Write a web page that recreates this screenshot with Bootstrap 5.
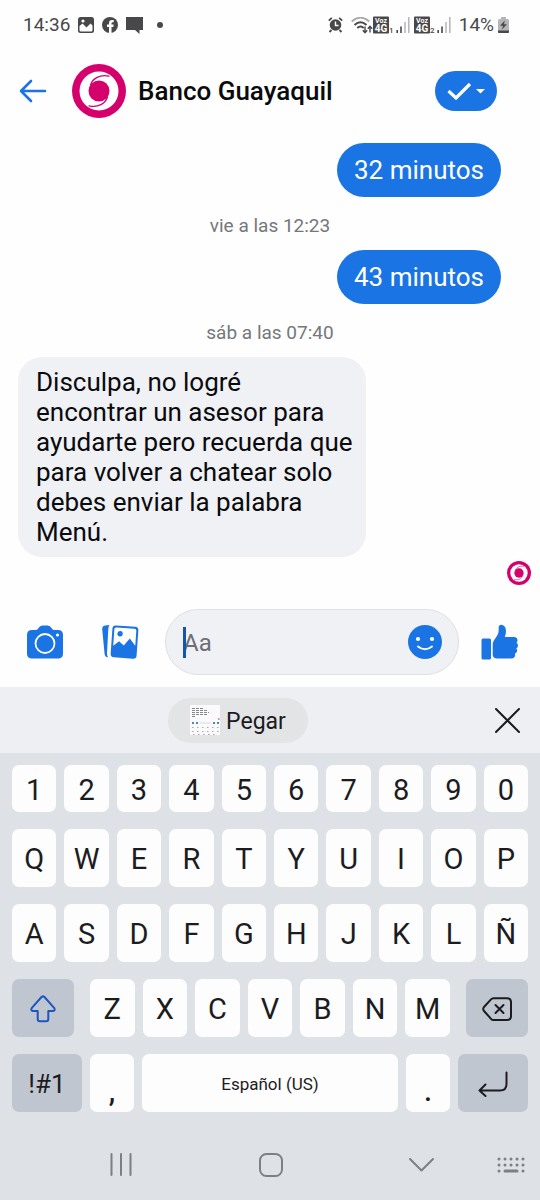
<!DOCTYPE html>
<html lang="es">
<head>
<meta charset="utf-8">
<meta name="viewport" content="width=device-width, initial-scale=1">
<title>Banco Guayaquil</title>
<link href="https://cdn.jsdelivr.net/npm/bootstrap@5.3.0/dist/css/bootstrap.min.css" rel="stylesheet">
<style>
  :root { --brand: #1b74e4; --pink: #d6006d; }
  body { font-family: Roboto, "Liberation Sans", sans-serif; color: #0a0b0d; background: #fefefe; }
  svg { display: block; flex: none; }
  button { font: inherit; }
  .bare { border: 0; background: none; padding: 0; color: var(--brand); }
  .status-bar { height: 50px; padding: 0 31px 0 23px; font-size: 19px; line-height: 24px; color: #48484a; }
  .chat-head { height: 82px; padding: 0 43px 0 19px; }
  .chat-logo { margin-left: 25px; }
  .chat-title { font-size: 26px; line-height: 32px; font-weight: 500; margin: 0 0 0 12px; }
  .check-btn { width: 62px; height: 40px; background: var(--brand); border-radius: 20px; border: 0; padding: 0 12px; }
  .thread { padding: 11px 18px 24px; }
  .bubble { font-size: 26px; line-height: 30px; margin: 0; }
  .bubble-out { background: var(--brand); color: #fff; border-radius: 27px; padding: 12px 17px; margin-right: 21px; }
  .bubble-in { background: #f0f1f5; border-radius: 24px; padding: 10px 12px 10px 18px; max-width: 348px; }
  .seen { margin-right: -9px; }
  .stamp { font-size: 19px; line-height: 25px; padding: 16px 0 12px; color: #75777b; }
  .composer { padding: 0 22px 12px 26px; }
  .gallery-btn { margin-left: 37px; }
  .field { flex: 1 1 0; min-width: 0; height: 66px; border-radius: 33px; background: #f0f1f5; border: 1px solid #dfe0e5; padding: 0 16px 0 17px; margin: 0 22px 0 26px; }
  .field input { flex: 1 1 0; border: 0; background: none; outline: 0; min-width: 0; width: 0; font-size: 24px; line-height: 30px; padding: 2px 0 0; color: #0a0b0d; }
  .field input::placeholder { color: #6d6f73; opacity: 1; }
  .caret { width: 3px; height: 31px; left: 17px; top: 17px; background: #1457a8; }
  .clip-bar { height: 66px; background: #eeeff3; padding: 0 20px; }
  .clip-btn { height: 45px; width: 140px; margin-left: 148px; gap: 6px; border-radius: 23px; border: 0; background: #e3e4e6; font-size: 23px; line-height: 28px; color: #1b1b1d; }
  .clip-btn span { padding-top: 3px; }
  .keyboard { background: #dee1e6; padding: 12px 12px 17px; gap: 17px; }
  .key-line { gap: 8px; }
  .key { flex: 1 1 0; min-width: 0; height: 58px; border: 0; border-radius: 7px; background: #fdfdfd; color: #1c1c1e; font-size: 29px; line-height: 34px; padding: 2px 0 0; display: flex; align-items: center; justify-content: center; }
  .key-num { height: 47px; }
  .key-dark { background: #c0c6d0; }
  .key-side { flex: 0 0 62px; }
  .key-end { flex: 0 0 70px; font-size: 26px; }
  .key-dot { flex: 0 0 44px; padding-top: 15px; font-weight: 500; }
  .key-space { font-size: 17px; }
  .sys-nav { background: #dee1e6; padding: 0 15px 0 46px; height: 71px; }
  .sys-nav button { color: #7c7f85; }
</style>
</head>
<body>
<svg width="0" height="0" class="position-absolute" aria-hidden="true">
  <symbol id="logo" viewBox="0 0 54 54">
    <circle cx="27" cy="27" r="27" fill="#d6006d"/>
    <circle cx="27" cy="27" r="19.500" fill="#fff"/>
    <circle cx="27" cy="27" r="10.500" fill="#d6006d"/>
    <path d="M18.500 21C20.500 14.500 28 10 37 12.200M35.500 33C33.500 39.500 26 44 17 41.800" fill="none" stroke="#d6006d" stroke-width="1.300" stroke-linecap="round"/>
  </symbol>
  <symbol id="bars" viewBox="0 0 14 16">
    <path d="M1.200 13v3M5 9.500V16" stroke="#48484a" stroke-width="1.600"/>
    <path d="M9 5v11M12.800 0v16" stroke="#b5b5b7" stroke-width="1.500"/>
  </symbol>
</svg>

<header>
  <div class="status-bar d-flex align-items-center justify-content-between">
    <div class="d-flex align-items-center gap-2">
      <span>14:36</span>
      <svg width="16" height="16" viewBox="0 0 16 16"><rect width="16" height="16" rx="2.500" fill="#48484a"/><path d="M1.500 13V9l3-2.500 4 4 4-4 2 2V13q0 1.500-1.500 1.500H3Q1.500 14.500 1.500 13Z" fill="#fff"/><circle cx="5" cy="4" r="1.600" fill="#fff"/></svg>
      <svg width="16" height="16" viewBox="0 0 16 16"><circle cx="8" cy="8" r="8" fill="#48484a"/><path d="M7 16V10H5V7.500H7V6q0-3 3-3h1.700v2.300H10.500Q9.500 5.300 9.500 6.300V7.500h2.200L11.300 10H9.500v6Z" fill="#fff"/></svg>
      <svg width="17" height="17" viewBox="0 0 17 17"><path d="M0 0h17v13h-3.500v4L9 13H0Z" fill="#48484a"/></svg>
      <svg width="22" height="6" viewBox="0 0 22 6"><circle cx="9" cy="3" r="3" fill="#48484a"/></svg>
    </div>
    <div class="d-flex align-items-center">
      <svg width="15" height="16" viewBox="0 0 15 16" class="me-2"><circle cx="7.500" cy="8" r="5.800" fill="#48484a"/><path d="M.8 3.600 3.800.9M14.200 3.600l-3-2.700M3.500 13l-2 2M11.500 13l2 2" stroke="#48484a" stroke-width="1.800"/><path d="M7.500 4.500V8.500h3" stroke="#fff" stroke-width="1.400" fill="none"/></svg>
      <svg width="22" height="17" viewBox="0 0 22 17" fill="none"><path d="M.7 4.500Q9.500-3.200 18.300 4.500" stroke="#aaa" stroke-width="1.800"/><path d="M3.500 8Q9.500 2.500 15.500 8M6.300 11Q9.500 8 12.700 11" stroke="#48484a" stroke-width="2"/><path d="M14 9.500v6M11.800 13.300l2.200 2.500 2.200-2.500M19 15.500v-6M16.800 11.700l2.200-2.500 2.200 2.500" stroke="#48484a" stroke-width="1.400"/></svg>
      <svg width="23" height="20" viewBox="0 -2 23 20" font-family="Roboto" fill="#fff" font-weight="700"><rect y="-.5" width="16" height="17" rx="1" fill="#48484a"/><text x="8" y="5.500" text-anchor="middle" font-size="7">Voz</text><text x="8" y="15" text-anchor="middle" font-size="10">4G</text><text x="16" y="16" font-size="8" font-weight="500" fill="#48484a">1</text></svg>
      <svg width="14" height="16"><use href="#bars"/></svg>
      <svg width="23" height="20" viewBox="0 -2 23 20" class="ms-1" font-family="Roboto" fill="#fff" font-weight="700"><rect y="-.5" width="16" height="17" rx="1" fill="#48484a"/><text x="8" y="5.500" text-anchor="middle" font-size="7">Voz</text><text x="8" y="15" text-anchor="middle" font-size="10">4G</text><text x="16" y="16" font-size="8" font-weight="500" fill="#48484a">2</text></svg>
      <svg width="14" height="16"><use href="#bars"/></svg>
      <span class="ms-2 me-1">14%</span>
      <svg width="11" height="16" viewBox="0 0 11 16"><path d="M3 0h5v2h1.500Q11 2 11 3.500V15q0 1-1 1H1q-1 0-1-1V3.500Q0 2 1.500 2H3Z" fill="#b5b5b7"/><path d="M0 13.500h11V15q0 1-1 1H1q-1 0-1-1Z" fill="#48484a"/><path d="M6.800 3.500 2 8.800h3L4 12.500 9 7.300H6Z" fill="#48484a"/></svg>
    </div>
  </div>
  <div class="chat-head d-flex align-items-center">
    <button class="bare" type="button" aria-label="Atrás"><svg width="28" height="24" viewBox="0 0 28 24" fill="none" stroke="#1b74e4" stroke-width="2.600" stroke-linecap="round" stroke-linejoin="round"><path d="M26 12H2M12 2 2 12l10 10"/></svg></button>
    <svg class="chat-logo" width="54" height="54"><use href="#logo"/></svg>
    <h1 class="chat-title">Banco Guayaquil</h1>
    <button class="check-btn ms-auto" type="button" aria-label="Opciones"><svg width="38" height="18" viewBox="0 0 38 18"><path d="M1.500 9 9 16 23 2" fill="none" stroke="#fff" stroke-width="3.200"/><path d="M29 7h9l-4.500 4.500Z" fill="#fff"/></svg></button>
  </div>
</header>

<main class="thread d-flex flex-column">
  <p class="bubble bubble-out align-self-end">32 minutos</p>
  <div class="stamp text-center">vie a las 12:23</div>
  <p class="bubble bubble-out align-self-end">43 minutos</p>
  <div class="stamp text-center">sáb a las 07:40</div>
  <p class="bubble bubble-in align-self-start">Disculpa, no logré encontrar un asesor para ayudarte pero recuerda que para volver a chatear solo debes enviar la palabra Menú.</p>
  <svg width="24" height="24" class="seen align-self-end mt-1"><use href="#logo"/></svg>
</main>

<form class="composer d-flex align-items-center">
  <button class="bare" type="button" aria-label="Cámara"><svg width="38" height="34" viewBox="0 0 38 34"><path d="M6 5h4q1.500 0 2.500-2 1.300-2.500 4-2.500h5q2.700 0 4 2.500 1 2 2.500 2h4q5 0 5 5v18.500q0 5-5 5H6q-5 0-5-5V10q0-5 5-5Z" fill="#1b74e4"/><circle cx="19" cy="18.500" r="9.500" fill="none" stroke="#fff" stroke-width="1.800"/><circle cx="31.500" cy="10" r="1.600" fill="#fff"/></svg></button>
  <button class="bare gallery-btn" type="button" aria-label="Galería"><svg width="38" height="36" viewBox="0 0 38 36"><path d="M4 1.500 8.500 1Q7.500 2.500 7.300 5L6 29q-.2 2.500 1 4.500-3-.5-3.400-3.500L1.200 5Q1 2 4 1.500Z" fill="#1b74e4"/><g transform="rotate(4 23 18)"><rect x="10.500" y="2" width="26" height="32" rx="3.500" fill="#1b74e4"/><path d="M12.500 6q0-2 2-2h18q2 0 2 2v15L28.500 14 23 21.500l-5-4-5.500 5Z" fill="#fff"/><circle cx="18.500" cy="10" r="2.700" fill="#1b74e4"/></g></svg></button>
  <div class="field d-flex align-items-center position-relative">
    <input id="msg" type="text" placeholder="Aa" aria-label="Mensaje" autocomplete="off">
    <span class="caret position-absolute"></span>
    <button class="bare" type="button" aria-label="Emojis"><svg width="34" height="34" viewBox="0 0 34 34"><circle cx="17" cy="17" r="17" fill="#1b74e4"/><circle cx="10" cy="14" r="2.100" fill="#fff"/><circle cx="24" cy="14" r="2.100" fill="#fff"/><path d="M10 21.500Q17 27 24 21.500" fill="none" stroke="#fff" stroke-width="1.900" stroke-linecap="round"/></svg></button>
  </div>
  <button class="bare" type="button" aria-label="Me gusta"><svg width="37" height="36" viewBox="0 0 37 36" fill="#1b74e4"><rect x=".5" y="14.500" width="9.500" height="21" rx="1.500"/><path d="M11.700 20q0-2 1.500-4l3-4.500Q17.700 9 17.700 6V3.500Q17.700.7 20.500.7q4.500.8 4.500 6.800 0 3-1.200 5.500H33q3.500.3 3.500 3.200 0 1.600-1 2.600 1.500 1 1.500 2.700 0 2-1.700 3 1 1 .8 2.500-.2 1.700-2 2.500.5 5-4 5H16q-4.300-.3-4.300-4Z"/></svg></button>
</form>

<section aria-label="Teclado">
  <div class="clip-bar d-flex align-items-center">
    <button class="clip-btn d-flex align-items-center justify-content-center p-0" type="button"><svg width="30" height="30" viewBox="0 0 30 30"><rect width="30" height="30" fill="#fafafc"/><path d="M2 3.500h11M2 5.500h16M2 7.500h17M2 9.500h16M2 11.500h3" stroke="#888" stroke-dasharray="3 1" stroke-width="1"/><path d="M2 18h2M6 18h2M23 18h2M27 18h2" stroke="#4a86c8" stroke-width="2"/><path d="M10 18h11" stroke="#d4dae2"/><path d="M2 22.500h27M2 26.500h27M3 29.500h24" stroke="#aaa" stroke-dasharray="1.500 3.500"/><path d="M28 14h1.500" stroke="#d6006d"/></svg><span>Pegar</span></button>
    <button class="bare ms-auto" type="button" aria-label="Cerrar"><svg width="25" height="25" viewBox="0 0 25 25"><path d="M1 1l23 23M24 1 1 24" stroke="#1c1c1e" stroke-width="2" stroke-linecap="round"/></svg></button>
  </div>

  <div class="keyboard d-flex flex-column">
    <div class="key-line d-flex">
      <button class="key key-num" type="button">1</button><button class="key key-num" type="button">2</button><button class="key key-num" type="button">3</button><button class="key key-num" type="button">4</button><button class="key key-num" type="button">5</button><button class="key key-num" type="button">6</button><button class="key key-num" type="button">7</button><button class="key key-num" type="button">8</button><button class="key key-num" type="button">9</button><button class="key key-num" type="button">0</button>
    </div>
    <div class="key-line d-flex">
      <button class="key" type="button">Q</button><button class="key" type="button">W</button><button class="key" type="button">E</button><button class="key" type="button">R</button><button class="key" type="button">T</button><button class="key" type="button">Y</button><button class="key" type="button">U</button><button class="key" type="button">I</button><button class="key" type="button">O</button><button class="key" type="button">P</button>
    </div>
    <div class="key-line d-flex">
      <button class="key" type="button">A</button><button class="key" type="button">S</button><button class="key" type="button">D</button><button class="key" type="button">F</button><button class="key" type="button">G</button><button class="key" type="button">H</button><button class="key" type="button">J</button><button class="key" type="button">K</button><button class="key" type="button">L</button><button class="key" type="button">Ñ</button>
    </div>
    <div class="key-line d-flex">
      <button class="key key-dark key-side me-2" type="button" aria-label="Mayúsculas"><svg width="26" height="28" viewBox="0 0 26 28" fill="none" stroke="#1d56c0" stroke-width="2" stroke-linejoin="round"><path d="M11.500 2Q13 .8 14.500 2L24.300 13.200Q25.500 15.500 23 16H18.300V24q0 2.200-2.200 2.200H9.900Q7.700 26.200 7.700 24V16H3Q.5 15.500 1.700 13.200Z"/></svg></button>
      <button class="key" type="button">Z</button><button class="key" type="button">X</button><button class="key" type="button">C</button><button class="key" type="button">V</button><button class="key" type="button">B</button><button class="key" type="button">N</button><button class="key" type="button">M</button>
      <button class="key key-dark key-side ms-2" type="button" aria-label="Borrar"><svg width="30" height="24" viewBox="0 0 30 24" fill="none" stroke="#1c1c1e" stroke-width="2" stroke-linecap="round" stroke-linejoin="round"><path d="M11.500 1.200H25q4 0 4 4V19q0 4-4 4H11.500q-1.500 0-2.500-1.200L2 14q-1.600-2 0-4L9 2.400Q10 1.200 11.500 1.200Z"/><path d="M13.500 8l8 8M21.500 8l-8 8"/></svg></button>
    </div>
    <div class="key-line d-flex">
      <button class="key key-dark key-end" type="button">!#1</button>
      <button class="key key-dot" type="button">,</button>
      <button class="key key-space" type="button">Español (US)</button>
      <button class="key key-dot" type="button">.</button>
      <button class="key key-dark key-end" type="button" aria-label="Intro"><svg width="30" height="26" viewBox="0 0 30 26" fill="none" stroke="#1c1c1e" stroke-width="2" stroke-linecap="round" stroke-linejoin="round"><path d="M28.500 1.500V13q0 6.500-6.500 6.500H2M7.500 13.500 1.500 19.500l6 5.500"/></svg></button>
    </div>
  </div>

  <nav class="sys-nav d-flex align-items-center" aria-label="Sistema">
    <button class="bare flex-fill d-flex justify-content-center w-100" type="button" aria-label="Recientes"><svg width="24" height="23" viewBox="0 0 24 23" stroke="currentColor" stroke-width="2" stroke-linecap="round"><path d="M2.500 1v21M12 1v21M21.500 1v21"/></svg></button>
    <button class="bare flex-fill d-flex justify-content-center w-100" type="button" aria-label="Inicio"><svg width="24" height="24" viewBox="0 0 24 24" fill="none" stroke="currentColor" stroke-width="2"><rect x="1" y="1" width="22" height="22" rx="6.500"/></svg></button>
    <button class="bare flex-fill d-flex justify-content-center w-100" type="button" aria-label="Ocultar teclado"><svg width="25" height="14" viewBox="0 0 25 14" fill="none" stroke="currentColor" stroke-width="2" stroke-linecap="round" stroke-linejoin="round"><path d="M1 1l11.500 11.500L24 1"/></svg></button>
    <button class="bare" type="button" aria-label="Cambiar teclado"><svg width="28" height="16" viewBox="0 0 28 16" stroke="currentColor" stroke-width="3" stroke-linecap="round"><path d="M2 2h.01M8 2h.01M14 2h.01M20 2h.01M26 2h.01M2 8h.01M8 8h.01M14 8h.01M20 8h.01M26 8h.01M2 14h.01M8 14h12M26 14h.01"/></svg></button>
  </nav>
</section>
<script src="https://cdn.jsdelivr.net/npm/bootstrap@5.3.0/dist/js/bootstrap.bundle.min.js"></script>
</body>
</html>
